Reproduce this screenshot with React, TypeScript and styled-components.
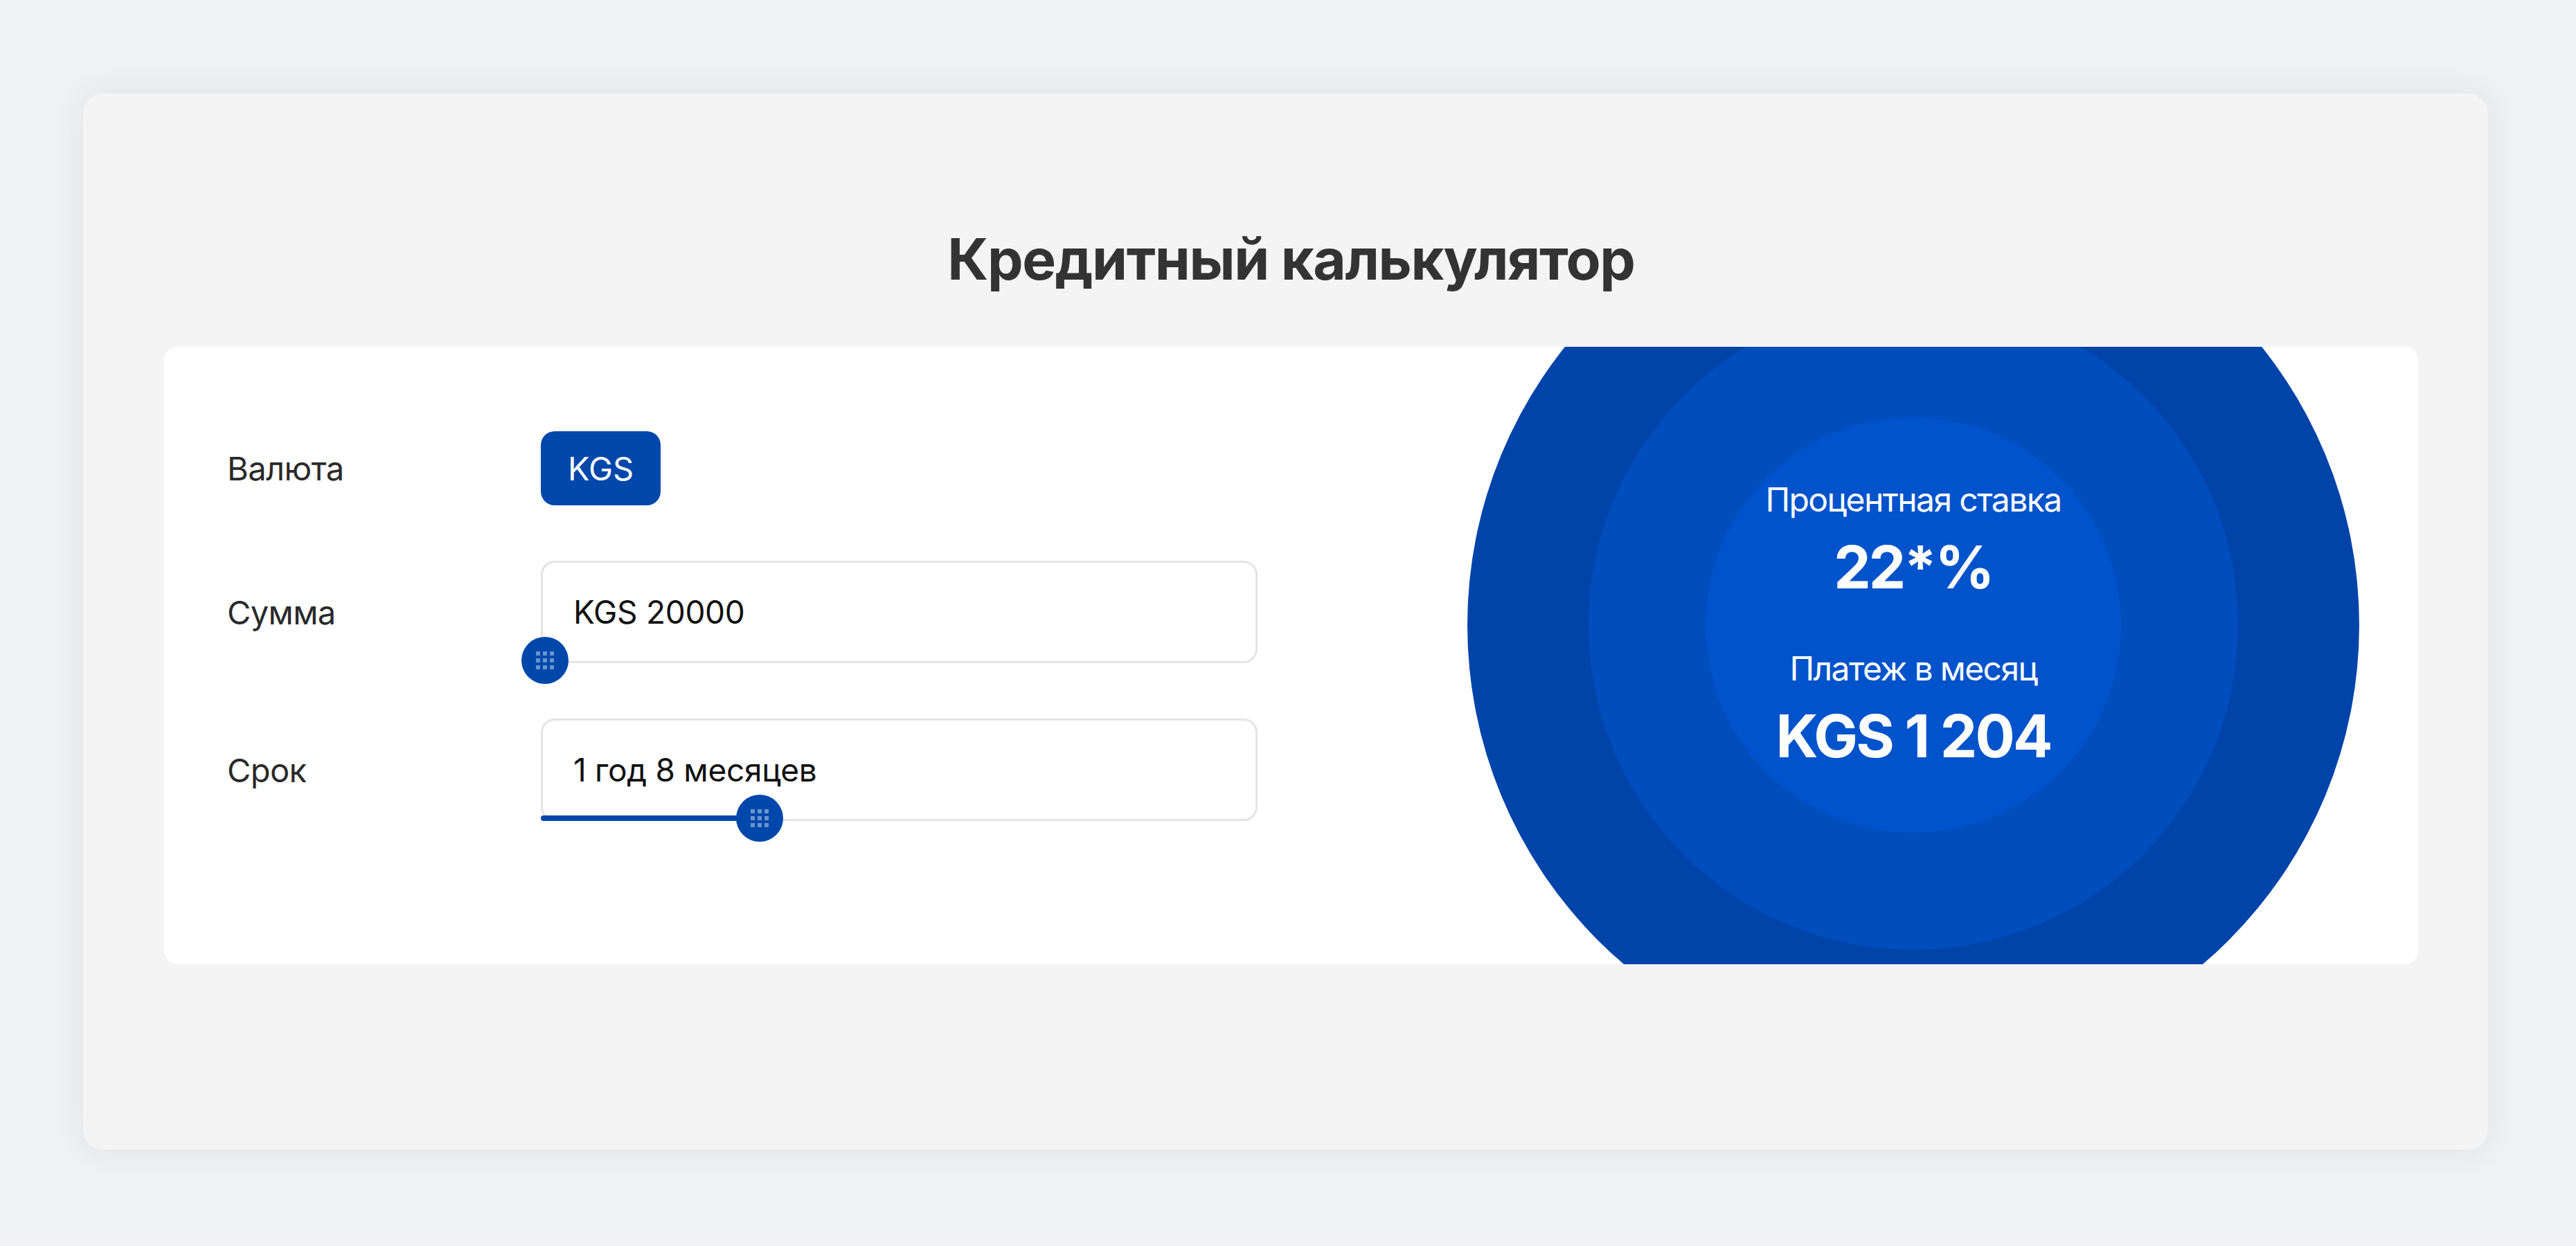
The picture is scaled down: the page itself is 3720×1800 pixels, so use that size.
import { Fragment } from "react";
import styled, { createGlobalStyle } from "styled-components";

type SliderField = {
  label: string;
  value: string;
  progress: number;
};

const fields: Array<SliderField> = [
  { label: "Сумма", value: "KGS 20000", progress: 0 },
  { label: "Срок", value: "1 год 8 месяцев", progress: 0.303 },
];

const FIELD_WIDTH = 1035;
const THUMB_MIN = 6;

const GlobalStyle = createGlobalStyle`
  html, body {
    margin: 0;
    padding: 0;
    background: #f0f1f3;
  }

  body {
    font-family: Inter, "Noto Sans", sans-serif;
  }
`;

const Page = styled.div`
  padding: 135px 0 137px 120px;
`;

const Card = styled.section`
  width: 3473px;
  box-sizing: border-box;
  padding: 199px 101px 268px 117px;
  background: #f4f4f4;
  border-radius: 30px;
  box-shadow: 0 0 46px rgba(30, 40, 60, 0.07);
`;

const Title = styled.h1`
  margin: 0 0 85px;
  text-align: center;
  font-size: 82px;
  line-height: 82px;
  font-weight: 700;
  letter-spacing: -1.4px;
  color: #333;
`;

const Panel = styled.div`
  display: grid;
  grid-template-columns: 1797px 1fr;
  grid-template-rows: 100%;
  height: 892px;
  background: #fff;
  border-radius: 20px;
  overflow: hidden;
`;

const Form = styled.div`
  display: grid;
  grid-template-columns: 453px ${FIELD_WIDTH}px;
  row-gap: 80px;
  align-items: center;
  align-content: start;
  padding: 122px 0 0 91px;
`;

const Label = styled.span`
  font-size: 47px;
  letter-spacing: -0.6px;
  color: #2a2a2a;
`;

const CurrencyButton = styled.button`
  justify-self: start;
  height: 107px;
  padding: 0 39px;
  border: 0;
  border-radius: 20px;
  background: #0047ab;
  color: #fff;
  font-family: Inter, sans-serif;
  font-size: 47px;
`;

const Field = styled.div`
  position: relative;
  height: 148px;
  box-sizing: border-box;
  border: 3px solid #e4e4e4;
  border-radius: 20px;
  padding: 0 44px;
  display: flex;
  align-items: center;
  font-size: 46px;
  letter-spacing: -0.3px;
  color: #111;
`;

const Track = styled.span`
  position: absolute;
  left: -3px;
  bottom: -3px;
  height: 8px;
  border-radius: 4px;
  background: #0047ab;
`;

const Thumb = styled.span`
  position: absolute;
  bottom: -33px;
  width: 68px;
  height: 68px;
  border-radius: 50%;
  background: #0047ab;
  display: grid;
  place-items: center;
`;

const Grip = styled.span`
  display: grid;
  grid-template-columns: repeat(3, 6px);
  gap: 4px;
`;

const Dot = styled.span`
  width: 6px;
  height: 6px;
  background: rgba(255, 255, 255, 0.42);
`;

const Visual = styled.div`
  display: flex;
  align-items: center;
  justify-content: center;
  min-height: 0;
`;

const Ring = styled.div<{ $size: number; $color: string }>`
  flex-shrink: 0;
  width: ${(p) => p.$size}px;
  height: ${(p) => p.$size}px;
  border-radius: 50%;
  background: ${(p) => p.$color};
  display: flex;
  align-items: center;
  justify-content: center;
`;

const OuterRing = styled(Ring)`
  margin-bottom: 88px;
`;

const Stats = styled.div`
  display: flex;
  flex-direction: column;
  align-items: center;
  gap: 66px;
  color: #fff;
  text-align: center;
`;

const Stat = styled.div`
  display: flex;
  flex-direction: column;
  gap: 18px;
`;

const StatLabel = styled.span`
  font-size: 48px;
  line-height: 60px;
  letter-spacing: -1.6px;
`;

const StatValue = styled.span`
  font-size: 85px;
  line-height: 100px;
  font-weight: 700;
  letter-spacing: -2.8px;
`;

function Slider({ value, progress }: SliderField) {
  const center = THUMB_MIN + progress * (FIELD_WIDTH - THUMB_MIN * 2);

  return (
    <Field>
      {value}
      {progress > 0 && <Track style={{ width: `${center}px` }} />}
      <Thumb style={{ left: `${center - 37}px` }}>
        <Grip>
          {Array.from({ length: 9 }).map((_, i) => (
            <Dot key={i} />
          ))}
        </Grip>
      </Thumb>
    </Field>
  );
}

export default function App() {
  return (
    <Page>
      <GlobalStyle />
      <Card>
        <Title>Кредитный калькулятор</Title>

        <Panel>
          <Form>
            <Label>Валюта</Label>
            <CurrencyButton>KGS</CurrencyButton>

            {fields.map((field) => (
              <Fragment key={field.label}>
                <Label>{field.label}</Label>
                <Slider {...field} />
              </Fragment>
            ))}
          </Form>

          <Visual>
            <OuterRing $size={1288} $color="#0044a9">
              <Ring $size={938} $color="#004dbd">
                <Ring $size={600} $color="#0053ca">
                  <Stats>
                    <Stat>
                      <StatLabel>Процентная ставка</StatLabel>
                      <StatValue>22*%</StatValue>
                    </Stat>
                    <Stat>
                      <StatLabel>Платеж в месяц</StatLabel>
                      <StatValue>KGS 1 204</StatValue>
                    </Stat>
                  </Stats>
                </Ring>
              </Ring>
            </OuterRing>
          </Visual>
        </Panel>
      </Card>
    </Page>
  );
}
